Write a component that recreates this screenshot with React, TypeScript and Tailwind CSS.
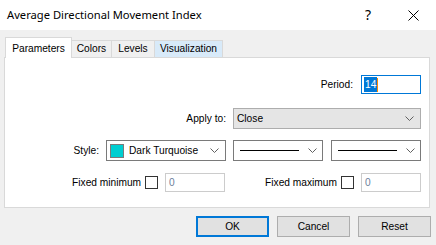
const Chevron = () => (
  <svg width="9" height="5" viewBox="0 0 9 5" className="shrink-0">
    <polyline points="0.5,0.5 4.5,4.5 8.5,0.5" fill="none" stroke="#606060" strokeWidth="1" />
  </svg>
);

const tabs = [
  { label: "Colors", w: "w-[40px]", bg: "bg-[#f0f0f0]" },
  { label: "Levels", w: "w-[43px]", bg: "bg-[#f0f0f0]" },
  { label: "Visualization", w: "w-[68px]", bg: "bg-[#d8eaf9]" },
];

export default function App() {
  return (
    <div className="flex h-[245px] w-[436px] flex-col bg-[#f0f0f0] font-['Liberation_Sans',Arial,sans-serif] text-[10.2px] text-black">
      <div className="flex h-[30px] shrink-0 items-center bg-white">
        <span className="pl-[7px] font-['Noto_Sans',sans-serif] text-[11.2px] leading-none">
          Average Directional Movement Index
        </span>
        <span className="ml-auto mr-[37px] font-['Noto_Sans',sans-serif] text-[14px] leading-none">?</span>
        <svg width="11" height="11" viewBox="0 0 11 11" className="mr-[17px]">
          <path d="M0.5 0.5 L10.5 10.5 M10.5 0.5 L0.5 10.5" stroke="#000" strokeWidth="1" />
        </svg>
      </div>

      <div className="flex flex-col pl-[4px] pt-[7px]">
        <div className="flex h-[20px] items-end pl-[1px]">
          <div className="relative z-10 -mb-px flex h-[21px] w-[67px] items-start justify-center border border-b-0 border-[#d9d9d9] bg-white pt-[3px]">
            Parameters
          </div>
          {tabs.map((t) => (
            <div
              key={t.label}
              className={`flex h-[17px] items-center justify-center border border-b-0 border-l-0 border-[#d9d9d9] ${t.w} ${t.bg}`}
            >
              {t.label}
            </div>
          ))}
        </div>

        <div className="flex h-[151px] w-[426px] flex-col border border-[#d9d9d9] bg-white pr-[8px] pt-[17px]">
          <div className="flex h-[19px] items-center justify-end gap-[8px]">
            <span>Period:</span>
            <div className="flex h-[19px] w-[60px] items-center border border-[#0078d7] pl-[2px]">
              <span className="bg-[#0078d7] px-px text-white">14</span>
              <span className="h-[14px] w-px bg-[#ff8a00]" />
            </div>
          </div>

          <div className="mt-[14px] flex h-[21px] items-center justify-end gap-[7px]">
            <span>Apply to:</span>
            <div className="flex h-[21px] w-[188px] items-center justify-between border border-[#adadad] bg-[#e5e5e5] pl-[3px] pr-[6px]">
              <span>Close</span>
              <Chevron />
            </div>
          </div>

          <div className="mt-[11px] flex h-[21px] items-center justify-end gap-[7px]">
            <span>Style:</span>
            <div className="flex h-[21px] w-[120px] items-center border border-[#7a7a7a] pl-[3px] pr-[6px]">
              <span className="h-[14px] w-[14px] border border-[#7a7a7a] bg-[#00ced1]" />
              <span className="ml-[5px]">Dark Turquoise</span>
              <span className="ml-auto">
                <Chevron />
              </span>
            </div>
            <div className="flex h-[21px] w-[90px] items-center border border-[#7a7a7a] pl-[6px] pr-[5px]">
              <span className="h-px w-[59px] bg-black" />
              <span className="ml-auto">
                <Chevron />
              </span>
            </div>
            <div className="ml-px flex h-[21px] w-[90px] items-center border border-[#7a7a7a] pl-[6px] pr-[5px]">
              <span className="h-px w-[59px] bg-black" />
              <span className="ml-auto">
                <Chevron />
              </span>
            </div>
          </div>

          <div className="mt-[12px] flex h-[19px] items-center justify-end">
            <span>Fixed minimum</span>
            <span className="ml-[4px] h-[13px] w-[13px] border border-[#333333] bg-white" />
            <div className="ml-[7px] flex h-[19px] w-[60px] items-center border border-[#cccccc] pl-[3px] text-[#6d7f9b]">0</div>
            <span className="ml-[40px]">Fixed maximum</span>
            <span className="ml-[4px] h-[13px] w-[13px] border border-[#333333] bg-white" />
            <div className="ml-[7px] flex h-[19px] w-[60px] items-center border border-[#cccccc] pl-[3px] text-[#6d7f9b]">0</div>
          </div>
        </div>
      </div>

      <div className="mt-[8px] flex justify-end gap-[8px] pr-[5px]">
        <button className="flex h-[21px] w-[73px] items-center justify-center border-2 border-[#0078d7] bg-[#e1e1e1]">OK</button>
        <button className="flex h-[21px] w-[73px] items-center justify-center border border-[#adadad] bg-[#e1e1e1]">Cancel</button>
        <button className="flex h-[21px] w-[73px] items-center justify-center border border-[#adadad] bg-[#e1e1e1]">Reset</button>
      </div>
    </div>
  );
}
